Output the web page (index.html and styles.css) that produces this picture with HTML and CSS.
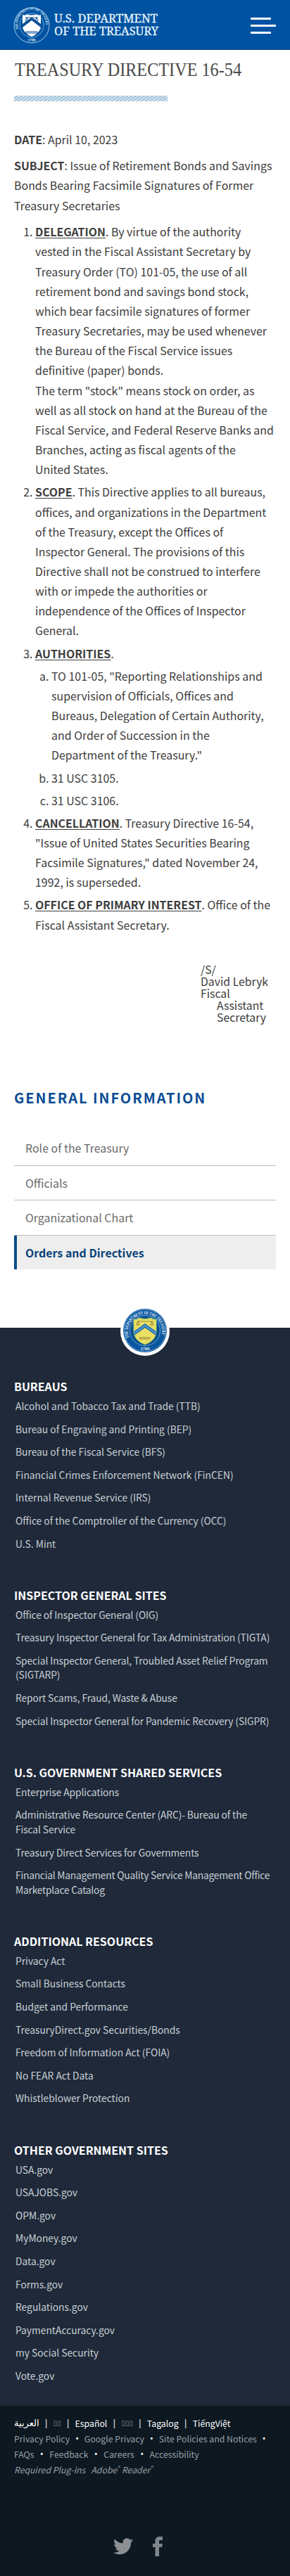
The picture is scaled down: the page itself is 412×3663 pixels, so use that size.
FILE: index.html
```html
<!DOCTYPE html>
<html lang="en">
<head>
<meta charset="utf-8">
<title>Treasury Directive 16-54</title>
<link rel="stylesheet" href="styles.css">
</head>
<body>
<header class="top">
  <svg class="top-logo" width="210" height="56" viewBox="0 0 210 56">
    <defs><path id="arc-w" d="M7.6 32A19.8 19.8 0 1 1 44.4 32"/></defs>
    <circle cx="26" cy="27" r="25" fill="none" stroke="#a9cbea" stroke-width="1"/>
    <circle cx="26" cy="27" r="17" fill="none" stroke="#8fb9df" stroke-width=".8"/>
    <text class="seal-text" fill="#d9eafa"><textPath href="#arc-w" textLength="71" lengthAdjust="spacingAndGlyphs">THE DEPARTMENT OF THE TREASURY</textPath></text>
    <text class="seal-text" x="26" y="49.5" fill="#d9eafa" text-anchor="middle">1789</text>
    <path d="M13 12q4 1.500 6-.500 7 2 14 0 2 2 6 .500v14q0 12-13 17-13-5-13-17z" fill="#fff"/>
    <path d="M13 30l13-10 13 10v-5L26 15.500 13 25z" fill="#0b4f94"/>
    <path d="M13 32l13-10 13 10" fill="none" stroke="#fff" stroke-width="1"/>
    <path d="M17 16h18M19 16l-2 5h4zM33 16l-2 5h4zM18 36h16v2H18z" fill="none" stroke="#0b4f94" stroke-width="1"/>
    <text class="logo-name" x="58" y="22.500" textLength="147" lengthAdjust="spacingAndGlyphs">U.S. DEPARTMENT</text>
    <text class="logo-name" x="58" y="41" textLength="148" lengthAdjust="spacingAndGlyphs">OF THE TREASURY</text>
  </svg>
  <div class="burger"><i></i><i class="long"></i><i></i></div>
</header>
<main class="content">
  <h1 class="title"><svg width="372" height="44" viewBox="0 0 372 44"><text x="1" y="27" textLength="322" lengthAdjust="spacingAndGlyphs">TREASURY DIRECTIVE 16-54</text></svg></h1>
  <svg class="stripes" width="218" height="8"><defs><pattern id="hatch" width="6" height="8" patternUnits="userSpaceOnUse"><rect width="6" height="8" fill="#d3e4f1"/><path d="M-6 8L6 0M0 8L12 0M-12 8L0 0" stroke="#94b8d4" stroke-width="1.300"/></pattern></defs><rect width="218" height="8" fill="url(#hatch)"/></svg>
  <p class="para"><b>DATE</b>: April 10, 2023</p>
  <p class="para"><b>SUBJECT</b>: Issue of Retirement Bonds and Savings<br>Bonds Bearing Facsimile Signatures of Former<br>Treasury Secretaries</p>
  <ol class="list">
    <li><b class="head">DELEGATION</b>. By virtue of the authority<br>vested in the Fiscal Assistant Secretary by<br>Treasury Order (TO) 101-05, the use of all<br>retirement bond and savings bond stock,<br>which bear facsimile signatures of former<br>Treasury Secretaries, may be used whenever<br>the Bureau of the Fiscal Service issues<br>definitive (paper) bonds.<br>The term "stock" means stock on order, as<br>well as all stock on hand at the Bureau of the<br>Fiscal Service, and Federal Reserve Banks and<br>Branches, acting as fiscal agents of the<br>United States.</li>
    <li><b class="head">SCOPE</b>. This Directive applies to all bureaus,<br>offices, and organizations in the Department<br>of the Treasury, except the Offices of<br>Inspector General. The provisions of this<br>Directive shall not be construed to interfere<br>with or impede the authorities or<br>independence of the Offices of Inspector<br>General.</li>
    <li><b class="head">AUTHORITIES</b>.
      <ol class="sublist">
        <li>TO 101-05, "Reporting Relationships and<br>supervision of Officials, Offices and<br>Bureaus, Delegation of Certain Authority,<br>and Order of Succession in the<br>Department of the Treasury."</li>
        <li>31 USC 3105.</li>
        <li>31 USC 3106.</li>
      </ol>
    </li>
    <li><b class="head">CANCELLATION</b>. Treasury Directive 16-54,<br>"Issue of United States Securities Bearing<br>Facsimile Signatures," dated November 24,<br>1992, is superseded.</li>
    <li><b class="head">OFFICE OF PRIMARY INTEREST</b>. Office of the<br>Fiscal Assistant Secretary.</li>
  </ol>
  <div class="sign">/S/<br>David Lebryk<br>Fiscal<div class="sign-in">Assistant<br>Secretary</div></div>
  <h2 class="side-title">GENERAL INFORMATION</h2>
  <nav class="side">
    <a>Role of the Treasury</a>
    <a>Officials</a>
    <a>Organizational Chart</a>
    <a class="active">Orders and Directives</a>
  </nav>
</main>
<footer class="foot">
  <svg class="seal" width="70" height="70" viewBox="0 0 70 70">
    <defs><path id="arc-c" d="M12.500 44A24.200 24.200 0 1 1 57.500 44"/></defs>
    <circle cx="35" cy="35" r="35" fill="#fff"/>
    <circle cx="35" cy="34" r="31" fill="#0a57a0"/>
    <circle cx="35" cy="34" r="29.800" fill="none" stroke="#8db9de" stroke-width=".7"/>
    <circle cx="35" cy="34" r="21.500" fill="#07508f" stroke="#8db9de" stroke-width=".8"/>
    <text class="seal-text big" fill="#e8f3fb"><textPath href="#arc-c" textLength="90" lengthAdjust="spacingAndGlyphs">THE DEPARTMENT OF THE TREASURY</textPath></text>
    <text class="seal-text big" x="35" y="62" fill="#e8f3fb" text-anchor="middle">1789</text>
    <path d="M19 18q5 1 7-2 9 3 18 0 2 3 7 2v17q0 13-16 19-16-6-16-19z" fill="#e9df62" stroke="#9cc86a" stroke-width="1"/>
    <path d="M19.500 41L35 30l15.500 11v-6L35 24 19.500 35z" fill="#1d6cb5"/>
    <path d="M19.500 38L35 27l15.500 11" fill="none" stroke="#9fd0ee" stroke-width="1.300" stroke-dasharray="2 1"/>
    <path d="M24 21h22M25 21l-2 5h4zM45 21l-2 5h4zM27 44h16M28 44v2h14" fill="none" stroke="#9a8a3c" stroke-width="1.100"/>
  </svg>
  <section><h3>BUREAUS</h3><ul>
    <li>Alcohol and Tobacco Tax and Trade (TTB)</li>
    <li>Bureau of Engraving and Printing (BEP)</li>
    <li>Bureau of the Fiscal Service (BFS)</li>
    <li>Financial Crimes Enforcement Network (FinCEN)</li>
    <li>Internal Revenue Service (IRS)</li>
    <li>Office of the Comptroller of the Currency (OCC)</li>
    <li>U.S. Mint</li></ul></section>
  <section class="tight"><h3>INSPECTOR GENERAL SITES</h3><ul>
    <li>Office of Inspector General (OIG)</li>
    <li>Treasury Inspector General for Tax Administration (TIGTA)</li>
    <li>Special Inspector General, Troubled Asset Relief Program<br>(SIGTARP)</li>
    <li>Report Scams, Fraud, Waste &amp; Abuse</li>
    <li>Special Inspector General for Pandemic Recovery (SIGPR)</li></ul></section>
  <section class="tight"><h3>U.S. GOVERNMENT SHARED SERVICES</h3><ul>
    <li>Enterprise Applications</li>
    <li>Administrative Resource Center (ARC)- Bureau of the<br>Fiscal Service</li>
    <li>Treasury Direct Services for Governments</li>
    <li class="tighter">Financial Management Quality Service Management Office<br>Marketplace Catalog</li></ul></section>
  <section><h3>ADDITIONAL RESOURCES</h3><ul>
    <li>Privacy Act</li>
    <li>Small Business Contacts</li>
    <li>Budget and Performance</li>
    <li>TreasuryDirect.gov Securities/Bonds</li>
    <li>Freedom of Information Act (FOIA)</li>
    <li>No FEAR Act Data</li>
    <li>Whistleblower Protection</li></ul></section>
  <section><h3>OTHER GOVERNMENT SITES</h3><ul>
    <li>USA.gov</li>
    <li>USAJOBS.gov</li>
    <li>OPM.gov</li>
    <li>MyMoney.gov</li>
    <li>Data.gov</li>
    <li>Forms.gov</li>
    <li>Regulations.gov</li>
    <li>PaymentAccuracy.gov</li>
    <li>my Social Security</li>
    <li>Vote.gov</li></ul></section>
</footer>
<div class="bottom">
  <div class="row langs"><span class="ar" lang="ar">العربية</span><i>|</i><span class="box">▯▯</span><i>|</i><span>Español</span><i>|</i><span class="box">▯▯▯</span><i>|</i><span>Tagalog</span><i>|</i><span>TiếngViệt</span></div>
  <div class="row links"><span>Privacy Policy</span><i>•</i><span>Google Privacy</span><i>•</i><span>Site Policies and Notices</span><i>•</i></div>
  <div class="row links second"><span>FAQs</span><i>•</i><span>Feedback</span><i>•</i><span>Careers</span><i>•</i><span>Accessibility</span></div>
  <div class="row plugins"><span>Required Plug-ins</span><span>Adobe<sup>®</sup> Reader<sup>®</sup></span></div>
  <div class="social">
    <svg width="28" height="26" viewBox="0 0 24 20"><path d="M24 2.400a9.800 9.800 0 0 1-2.800.8A4.900 4.900 0 0 0 23.300.5a9.900 9.900 0 0 1-3.100 1.200 4.900 4.900 0 0 0-8.400 4.500A14 14 0 0 1 1.700 1a4.900 4.900 0 0 0 1.500 6.600 4.900 4.900 0 0 1-2.200-.6c0 2.300 1.600 4.400 3.900 4.900a5 5 0 0 1-2.200.1 4.900 4.900 0 0 0 4.600 3.400A9.900 9.900 0 0 1 0 17.500a13.900 13.900 0 0 0 7.500 2.200c9.100 0 14.300-7.700 14-14.600A10 10 0 0 0 24 2.400z" fill="#8b8f92"/></svg>
    <svg width="14" height="28" viewBox="0 0 14 28"><path d="M3.500 28V15H0v-5h3.500V6.500C3.500 2.500 5.500 0 9.500 0H14v5h-3c-1.800 0-2 .8-2 2v3h4.800l-.6 5H9v13z" fill="#7f878c"/></svg>
  </div>
</div>
</body>
</html>
```
FILE: styles.css
```css
* { box-sizing: border-box; }
body { margin: 0; background: #fff; color: #3d3d3d; font-family: "Noto Sans CJK SC", "Noto Sans", sans-serif; font-size: 15.95px; line-height: 28.16px; white-space: nowrap; overflow-x: hidden; }
svg { overflow: visible; }
.top { height: 71px; background: #0053a2; border-bottom: 1px solid #0b4580; display: flex; justify-content: space-between; padding: 9px 20px 0 19px; }
.logo-name { font-family: "Noto Serif", "Liberation Serif", serif; font-size: 17px; fill: #e6f3fc; stroke: #e6f3fc; stroke-width: .3px; }
.seal-text { font-family: "Liberation Serif", serif; font-size: 5.5px; font-weight: bold; }
.seal-text.big { font-size: 6.5px; }
.burger { display: flex; flex-direction: column; gap: 7px; padding-top: 16px; width: 36px; }
.burger i { height: 3px; width: 29px; background: #fff; border-radius: 1px; }
.burger .long { width: 36px; }
.content { padding: 0 20px; height: 1817px; }
.title { margin: 0; padding-top: 10px; height: 65px; }
.title svg { display: block; }
.title text { font-family: "Liberation Serif", serif; font-size: 27px; font-weight: 400; fill: #4a4a4a; }
.stripes { display: block; margin-bottom: 39.5px; }
.para { margin: 0 0 9.6px; }
.list { margin: 0; padding-left: 30px; }
.list li { margin-bottom: 4px; }
.sublist { list-style: lower-alpha; padding-left: 23px; margin: 4px 0 0; }
.head { text-decoration: underline; text-underline-offset: 2px; text-decoration-thickness: 1px; }
.sign { margin: 41px 0 0 265px; line-height: 17.1px; font-size: 15.8px; }
.sign-in { padding-left: 23px; }
.side-title { margin: 91px 0 0; font-size: 20px; line-height: 30px; letter-spacing: 1.95px; color: #0a4c94; }
.side { margin-top: 32px; display: flex; flex-direction: column; }
.side a { height: 49.5px; padding-left: 16px; line-height: 48px; border-bottom: 1px solid #babdc0; color: #6a6a6a; }
.side .active { height: 48px; background: #eee; border-left: 4px solid #0a4c8c; border-bottom: 0; padding-left: 12px; color: #0a4478; font-weight: bold; }
.foot { position: relative; height: 1533px; background: #1f2939; padding: 69px 20px 0; color: #c9d0d6; font-size: 13.8px; line-height: 20.5px; }
.seal { position: absolute; left: 171px; top: -30px; }
.foot h3 { margin: 0; font-size: 16px; line-height: 28px; font-weight: 600; color: #fff; letter-spacing: 0; }
.foot ul { list-style: none; margin: 4px 0 48.7px; padding: 0 0 0 2px; }
.foot li { margin-bottom: 12.1px; }
.tight { letter-spacing: -.1px; }
.tighter { letter-spacing: -.23px; }
.bottom { height: 242px; background: #0d1821; padding: 14px 20px 0; font-size: 12.3px; line-height: 22px; color: #98a0a5; }
.row { display: flex; height: 22px; }
.row i { font-family: "Noto Sans", sans-serif; font-style: normal; color: #fff; width: 4px; display: flex; justify-content: center; }
.langs { color: #fff; gap: 8px; }
.ar { font-family: "DejaVu Sans", sans-serif; font-size: 13px; }
.box { font-family: "DejaVu Sans", sans-serif; font-size: 10px; color: #8a9094; }
.links { gap: 8.4px; }
.links.second { gap: 8.9px; }
.plugins { font-style: italic; gap: 8px; }
.plugins sup { font-size: 8px; line-height: 0; }
.social { display: flex; gap: 28px; padding: 84px 0 0 141px; align-items: center; }
```
